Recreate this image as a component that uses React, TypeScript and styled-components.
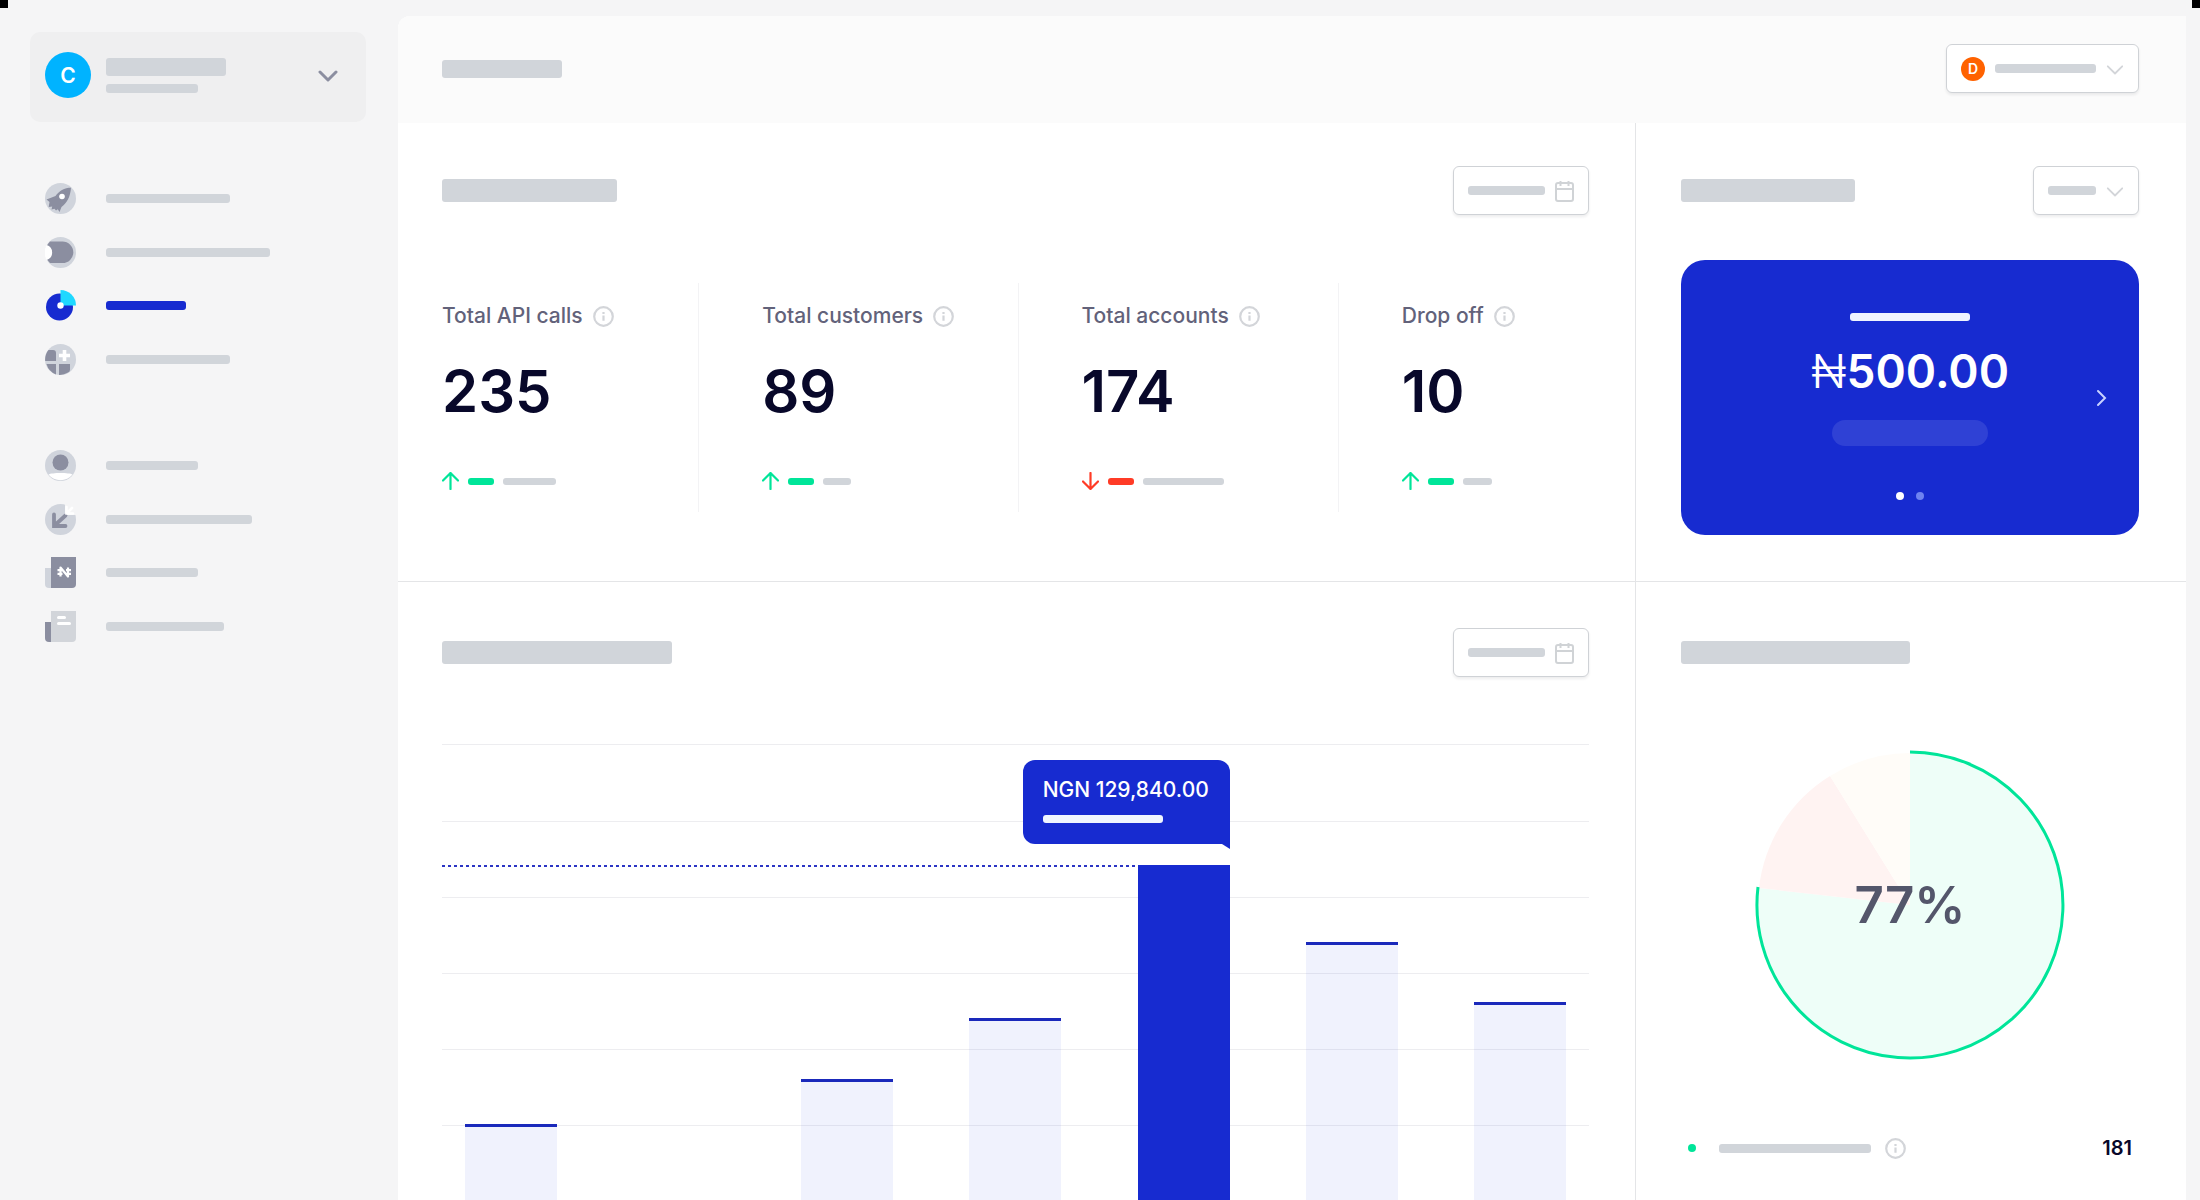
import React from "react";
import styled, { createGlobalStyle } from "styled-components";

const BLUE = "#172bd0";
const GREEN = "#00e599";
const RED = "#ff3b26";

const GlobalStyle = createGlobalStyle`
  *, *::before, *::after { box-sizing: border-box; }
  body {
    margin: 0;
    background: #f5f5f6;
    font-family: Inter, "Liberation Sans", sans-serif;
    color: #08082a;
  }
  button { font: inherit; color: inherit; cursor: pointer; }
  h1, h2, h3, p, ul, dl, dd, dt { margin: 0; padding: 0; list-style: none; }
`;

const Page = styled.div`
  position: relative;
  display: grid;
  grid-template-columns: 398px minmax(0, 1fr);
  height: 100vh;
  padding-right: 14px;
  overflow: hidden;
`;

const Corner = styled.span<{ $side: "left" | "right" }>`
  position: absolute;
  top: 0;
  ${(p) => p.$side}: 0;
  width: 8px;
  height: 8px;
  background: #000;
`;

const Bone = styled.span<{ $w: number; $h?: number; $tone?: string }>`
  display: block;
  flex: none;
  width: ${(p) => p.$w}px;
  height: ${(p) => p.$h ?? 9}px;
  border-radius: 3px;
  background: ${(p) => p.$tone ?? "#d1d5da"};
`;

/* Sidebar */

const Sidebar = styled.aside`
  padding: 32px 32px 0 30px;
`;

const AccountButton = styled.button`
  display: flex;
  align-items: center;
  width: 100%;
  height: 90px;
  padding: 0 28px 4px 15px;
  border: 0;
  border-radius: 10px;
  background: #efeff0;
`;

const Avatar = styled.span<{ $size: number; $tone: string; $font: number }>`
  display: grid;
  place-items: center;
  flex: none;
  width: ${(p) => p.$size}px;
  height: ${(p) => p.$size}px;
  border-radius: 50%;
  background: ${(p) => p.$tone};
  color: #fff;
  font-size: ${(p) => p.$font}px;
  font-weight: 600;
  line-height: 1;
`;

const AccountLines = styled.span`
  display: grid;
  gap: 8px;
  margin: 0 auto 0 15px;
`;

const NavGroup = styled.ul`
  display: flex;
  flex-direction: column;
  justify-content: space-between;
  min-height: 192px;
  margin-top: 61px !important;
  padding-left: 15px !important;

  & + & { margin-top: 75px !important; }
`;

const NavLink = styled.a`
  display: flex;
  align-items: center;
  gap: 30px;
  height: 31px;
`;

/* Main area */

const Main = styled.main`
  display: flex;
  flex-direction: column;
  min-width: 0;
  margin-top: 16px;
  border-radius: 12px 0 0 0;
  background: #fff;
  overflow: hidden;
`;

const TopBar = styled.header`
  display: flex;
  align-items: center;
  justify-content: space-between;
  flex: none;
  height: 107px;
  padding: 0 47px 2px 44px;
  background: #fbfbfb;
`;

const Panels = styled.div`
  display: grid;
  grid-template-columns: minmax(0, 1238fr) minmax(0, 550fr);
  grid-template-rows: 459px 1fr;
  flex: 1;
`;

const Panel = styled.section<{ $side?: boolean; $top?: boolean }>`
  display: flex;
  flex-direction: column;
  padding: ${(p) => (p.$top ? 43 : 46)}px ${(p) => (p.$side ? 47 : 46)}px 0
    ${(p) => (p.$side ? 45 : 44)}px;
  border-right: ${(p) => (p.$side ? "0" : "1px solid #e4e5e7")};
  border-bottom: ${(p) => (p.$top ? "1px solid #e4e5e7" : "0")};
`;

const PanelHead = styled.div`
  display: flex;
  align-items: center;
  justify-content: space-between;
  flex: none;
  height: 49px;
`;

const Picker = styled.button`
  display: flex;
  align-items: center;
  gap: 10px;
  height: 49px;
  padding: 0 14px;
  border: 1px solid #cfd2d6;
  border-radius: 6px;
  background: #fff;
  box-shadow: 0 2px 3px rgba(20, 20, 40, 0.08);
`;

const Stats = styled.dl`
  display: grid;
  grid-template-columns: 257fr 319fr 320fr 250fr;
  margin-top: 68px;
`;

const Stat = styled.div`
  height: 229px;
  padding: 20px 0 0 63px;
  border-right: 1px solid #f3f3f5;

  &:first-child { padding-left: 0; }
  &:last-child { border-right: 0; }
`;

const StatLabel = styled.dt`
  display: flex;
  align-items: center;
  gap: 10px;
  height: 26px;
  color: #62627a;
  font-size: 21px;
  font-weight: 500;
  line-height: 26px;
  white-space: nowrap;
`;

const StatValue = styled.dd`
  margin-top: 26px !important;
  font-size: 58px;
  font-weight: 600;
  line-height: 72px;
`;

const Trend = styled.dd`
  display: flex;
  align-items: center;
  gap: 9px;
  height: 20px;
  margin-top: 44px !important;
`;

/* Balance card */

const Balance = styled.div`
  display: grid;
  grid-template-columns: 40px 1fr 40px;
  align-items: center;
  height: 275px;
  margin-top: 45px;
  padding: 0 17px;
  border-radius: 24px;
  background: ${BLUE};
  color: #fff;
`;

const BalanceBody = styled.div`
  display: flex;
  flex-direction: column;
  align-items: center;
  grid-column: 2;
  height: 100%;
  padding-top: 53px;
`;

const Amount = styled.p`
  margin-top: 20px;
  font-size: 46px;
  font-weight: 600;
  line-height: 60px;
`;

const Currency = styled.span`
  font-weight: 300;
`;

const Pill = styled.span`
  width: 156px;
  height: 26px;
  margin-top: 19px;
  border-radius: 13px;
  background: #2f41d5;
`;

const Dots = styled.div`
  display: flex;
  gap: 12px;
  margin-top: 46px;
`;

const Dot = styled.span<{ $tone: string }>`
  flex: none;
  width: 8px;
  height: 8px;
  border-radius: 50%;
  background: ${(p) => p.$tone};
`;

const NextButton = styled.button`
  display: grid;
  place-items: center;
  width: 40px;
  height: 40px;
  padding: 0;
  border: 0;
  background: none;
`;

/* Bar chart */

const Plot = styled.div`
  position: relative;
  flex: 1;
  min-height: 480px;
  margin-top: 67px;
  overflow: hidden;
`;

const GridLines = styled.div`
  display: grid;
  grid-template-rows: 77px;
  grid-auto-rows: 76px;
`;

const GridLine = styled.span`
  border-top: 1px solid #ededf0;
`;

const Bars = styled.div`
  position: absolute;
  inset: 0;
  display: flex;
  justify-content: space-between;
  padding: 0 23px;
`;

const Bar = styled.div<{ $active?: boolean }>`
  position: relative;
  width: 92px;
  border-top: 3px solid ${(p) => (p.$active ? BLUE : "#1a29bb")};
  background: ${(p) => (p.$active ? BLUE : "rgba(23, 63, 220, 0.068)")};
`;

const BarGap = styled.div`
  width: 92px;
`;

const Marker = styled.span`
  position: absolute;
  top: -3px;
  right: 100%;
  width: 100vw;
  height: 2px;
  background: repeating-linear-gradient(to left, transparent 0 3px, #2b35c4 3px 6px);
`;

const Tip = styled.div`
  position: absolute;
  right: 0;
  bottom: calc(100% + 24px);
  width: 207px;
  height: 84px;
  padding: 18px 0 0 20px;
  border-radius: 12px 12px 0 12px;
  background: ${BLUE};
  color: #fff;
  font-size: 21px;
  font-weight: 500;
  line-height: 24px;
  white-space: nowrap;

  &::after {
    content: "";
    position: absolute;
    top: 100%;
    right: 0;
    border-top: 5px solid ${BLUE};
    border-left: 8px solid transparent;
  }
`;

const TipLine = styled(Bone)`
  margin-top: 13px;
`;

/* Pie chart */

const PieWrap = styled.div`
  display: grid;
  place-items: center;
  margin-top: 73px;
`;

const PieSvg = styled.svg`
  grid-area: 1 / 1;
`;

const PieLabel = styled.p`
  grid-area: 1 / 1;
  color: #54566b;
  font-size: 51px;
  font-weight: 600;
  line-height: 64px;
`;

const Legend = styled.div`
  display: flex;
  align-items: center;
  height: 24px;
  margin-top: 76px;
  padding: 0 7px 0 7px;
  font-size: 20px;
  font-weight: 600;
`;

const LegendName = styled.span`
  display: flex;
  align-items: center;
  gap: 14px;
  margin: 0 auto 0 23px;
`;

/* Icons */

const Info = () => (
  <svg width="21" height="21" viewBox="0 0 21 21" fill="none" stroke="#d3d5d9" strokeWidth="2.200">
    <circle cx="10.500" cy="10.500" r="9.300" />
    <path d="M10.500 9.500v5.300M10.500 6v2" />
  </svg>
);

const Calendar = () => (
  <svg width="19" height="22" viewBox="0 0 19 22" fill="none" stroke="#d0d3d6" strokeWidth="2">
    <rect x="1" y="3" width="17" height="18" rx="2" />
    <path d="M1 9h17M5.500 1v5M13.500 1v5" />
  </svg>
);

const Chevron = ({ size, tone, weight }: { size: number; tone: string; weight: number }) => (
  <svg width={size} height={size} viewBox="0 0 20 20" fill="none" stroke={tone} strokeWidth={weight} strokeLinecap="round" strokeLinejoin="round">
    <path d="M2 7l8 8 8-8" />
  </svg>
);

const ChevronNext = () => (
  <svg width="12" height="18" viewBox="0 0 12 18" fill="none" stroke="#c9d3ff" strokeWidth="2" strokeLinecap="round">
    <path d="M2 2l7 7-7 7" />
  </svg>
);

const Arrow = ({ down }: { down?: boolean }) => (
  <svg width="17" height="18" viewBox="0 0 17 18" fill="none" stroke={down ? RED : GREEN} strokeWidth="2.200" strokeLinecap="round" strokeLinejoin="round">
    <path d={down ? "M8.500 1v16M1 9.500L8.500 17 16 9.500" : "M8.500 17V1M1 8.500L8.500 1 16 8.500"} />
  </svg>
);

const LIGHT = "#d0d4dc";
const DARK = "#8b8ea0";

const glyphs: Record<string, React.ReactNode> = {
  rocket: (
    <>
      <circle cx="15.500" cy="15.500" r="15.500" fill={LIGHT} />
      <path d="M26.500 4.500C19 5 14 8 10.500 13L1.500 16.500l3 2.500-.8 5 3.500-.5-.7 3 3-.8 1.500 1.800 1.800-1.300 1.700 2.800 2-5c5-3.500 9-10 9.500-19.500z" fill={DARK} />
      <circle cx="17" cy="13.500" r="2.800" fill="#fff" />
    </>
  ),
  toggle: (
    <>
      <circle cx="15.500" cy="15.500" r="15.500" fill={LIGHT} />
      <path d="M5 4.500h12.500a10.800 10.800 0 0 1 0 21.600H5A15.500 15.500 0 0 1 5 4.500z" fill={DARK} />
      <path d="M1.500 8a7.800 7.800 0 0 1 0 15A15.500 15.500 0 0 1 1.500 8z" fill="#fff" />
    </>
  ),
  chart: (
    <>
      <circle cx="14.500" cy="17" r="13.500" fill={BLUE} />
      <path d="M15.500 0A15.500 15.500 0 0 1 31 15.500H15.500z" fill="#1fd8ff" />
      <circle cx="15.500" cy="15.500" r="3.200" fill="#fff" />
    </>
  ),
  apps: (
    <>
      <circle cx="15.500" cy="15.500" r="15.500" fill={LIGHT} />
      <path d="M3.500 6H8a3 3 0 0 1 3 3v8H.2C-.2 13 1 9 3.500 6zM1.500 20H11v10.400A15.500 15.500 0 0 1 1.500 20zM14 20h11v5.500a3 3 0 0 1-2 3 15.500 15.500 0 0 1-9 2.400z" fill={DARK} />
      <path d="M19.500 6v11M14 11.500h11" stroke="#fff" strokeWidth="3.600" />
    </>
  ),
  user: (
    <>
      <circle cx="15.500" cy="15.500" r="15.500" fill={LIGHT} />
      <path d="M3.500 24.500c3-2 21-2 24 0a15.500 15.500 0 0 1-24 0z" fill="#fff" />
      <circle cx="15.500" cy="12.500" r="8" fill={DARK} />
    </>
  ),
  incoming: (
    <>
      <circle cx="15.500" cy="15.500" r="15.500" fill={LIGHT} />
      <path d="M20 0h11v11H20z" fill="#f5f5f6" />
      <path d="M9 10.500v11.500h11.500M9.500 21.500l11-10" fill="none" stroke={DARK} strokeWidth="3.800" strokeLinecap="round" />
      <path d="M21.500 3v6.500H28M22 9l5-5" fill="none" stroke="#fff" strokeWidth="2.600" strokeLinecap="round" />
    </>
  ),
  naira: (
    <>
      <path d="M0 11h6v20H4a4 4 0 0 1-4-4z" fill={LIGHT} />
      <path d="M6 0h25v27a4 4 0 0 1-4 4H6z" fill={DARK} />
      <path d="M15.500 19.500v-9l7.500 9v-9M12.500 13.200h5M12.500 16.800h5M21 13.200h5M21 16.800h5" fill="none" stroke="#fff" strokeWidth="2.200" strokeLinejoin="round" />
    </>
  ),
  document: (
    <>
      <path d="M0 11h6v20H4a4 4 0 0 1-4-4z" fill={DARK} />
      <path d="M6 0h25v27a4 4 0 0 1-4 4H6z" fill="#d2d5da" />
      <path d="M13.500 6.500h6M13.500 12.500h11" stroke="#fff" strokeWidth="3" strokeLinecap="round" />
    </>
  ),
};

const NavIcon = ({ name }: { name: string }) => (
  <svg width="31" height="31" viewBox="0 0 31 31">
    {glyphs[name]}
  </svg>
);

/* Data */

const navGroups = [
  [
    { icon: "rocket", label: "Get started", width: 124 },
    { icon: "toggle", label: "Mode", width: 164 },
    { icon: "chart", label: "Dashboard", width: 80, active: true },
    { icon: "apps", label: "Apps", width: 124 },
  ],
  [
    { icon: "user", label: "Customers", width: 92 },
    { icon: "incoming", label: "Transactions", width: 146 },
    { icon: "naira", label: "Wallet", width: 92 },
    { icon: "document", label: "Documents", width: 118 },
  ],
];

const stats = [
  { label: "Total API calls", value: "235", line: 53 },
  { label: "Total customers", value: "89", line: 28 },
  { label: "Total accounts", value: "174", line: 81, down: true },
  { label: "Drop off", value: "10", line: 29 },
];

const bars = [380, null, 335, 274, 121, 198, 258];

const DatePicker = () => (
  <Picker aria-label="Choose dates">
    <Bone $w={77} />
    <Calendar />
  </Picker>
);

export default function App() {
  return (
    <>
      <GlobalStyle />
      <Page>
        <Sidebar>
          <AccountButton aria-label="Switch account">
            <Avatar $size={46} $tone="#00b3ff" $font={21}>C</Avatar>
            <AccountLines>
              <Bone $w={120} $h={18} />
              <Bone $w={92} />
            </AccountLines>
            <Chevron size={20} tone={DARK} weight={3} />
          </AccountButton>
          <nav>
            {navGroups.map((group, i) => (
              <NavGroup key={i}>
                {group.map((item) => (
                  <li key={item.icon}>
                    <NavLink href="#" aria-label={item.label}>
                      <NavIcon name={item.icon} />
                      <Bone $w={item.width} $tone={item.active ? BLUE : undefined} />
                    </NavLink>
                  </li>
                ))}
              </NavGroup>
            ))}
          </nav>
        </Sidebar>

        <Main>
          <TopBar>
            <Bone $w={120} $h={18} />
            <Picker aria-label="Environment">
              <Avatar $size={24} $tone="#ff6200" $font={14}>D</Avatar>
              <Bone $w={101} />
              <Chevron size={18} tone="#d3d5d9" weight={2} />
            </Picker>
          </TopBar>

          <Panels>
            <Panel $top>
              <PanelHead>
                <Bone $w={175} $h={23} />
                <DatePicker />
              </PanelHead>
              <Stats>
                {stats.map((s) => (
                  <Stat key={s.label}>
                    <StatLabel>
                      {s.label}
                      <Info />
                    </StatLabel>
                    <StatValue>{s.value}</StatValue>
                    <Trend>
                      <Arrow down={s.down} />
                      <Bone $w={26} $h={7} $tone={s.down ? RED : GREEN} />
                      <Bone $w={s.line} $h={7} />
                    </Trend>
                  </Stat>
                ))}
              </Stats>
            </Panel>

            <Panel $top $side>
              <PanelHead>
                <Bone $w={174} $h={23} />
                <Picker aria-label="Currency">
                  <Bone $w={48} />
                  <Chevron size={18} tone="#d3d5d9" weight={2} />
                </Picker>
              </PanelHead>
              <Balance>
                <BalanceBody>
                  <Bone $w={120} $h={8} $tone="#f0f4ff" />
                  <Amount>
                    <Currency>₦</Currency>500.00
                  </Amount>
                  <Pill />
                  <Dots>
                    <Dot $tone="#fff" />
                    <Dot $tone="#6f83f0" />
                  </Dots>
                </BalanceBody>
                <NextButton aria-label="Next balance">
                  <ChevronNext />
                </NextButton>
              </Balance>
            </Panel>

            <Panel>
              <PanelHead>
                <Bone $w={230} $h={23} />
                <DatePicker />
              </PanelHead>
              <Plot>
                <GridLines>
                  {[0, 1, 2, 3, 4, 5].map((n) => (
                    <GridLine key={n} />
                  ))}
                </GridLines>
                <Bars>
                  {bars.map((top, i) =>
                    top === null ? (
                      <BarGap key={i} />
                    ) : (
                      <Bar key={i} $active={i === 4} style={{ marginTop: top }}>
                        {i === 4 && (
                          <>
                            <Marker />
                            <Tip>
                              NGN 129,840.00
                              <TipLine $w={120} $h={8} $tone="#f0f6ff" />
                            </Tip>
                          </>
                        )}
                      </Bar>
                    )
                  )}
                </Bars>
              </Plot>
            </Panel>

            <Panel $side>
              <PanelHead>
                <Bone $w={229} $h={23} />
              </PanelHead>
              <PieWrap>
                <PieSvg width="310" height="310" viewBox="-155 -155 310 310">
                  <path d="M0 0V-152A152 152 0 1 1 -151 -17z" fill="#eefef8" />
                  <path d="M0 0L-151 -17A152 152 0 0 1 -80 -129z" fill="#fff3f2" />
                  <path d="M0 0L-80 -129A152 152 0 0 1 0 -152z" fill="#fffcf8" />
                  <path d="M0 -153A153 153 0 1 1 -152 -18" fill="none" stroke={GREEN} strokeWidth="3" />
                </PieSvg>
                <PieLabel>77%</PieLabel>
              </PieWrap>
              <Legend>
                <Dot $tone={GREEN} />
                <LegendName>
                  <Bone $w={152} />
                  <Info />
                </LegendName>
                181
              </Legend>
            </Panel>
          </Panels>
        </Main>
        <Corner $side="left" />
        <Corner $side="right" />
      </Page>
    </>
  );
}
